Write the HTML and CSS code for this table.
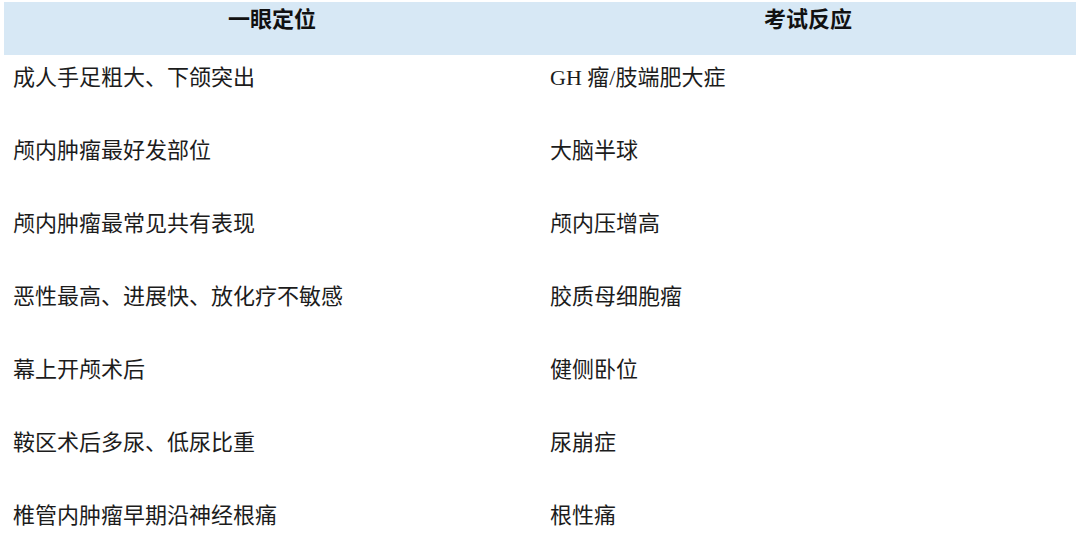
FILE: index.html
```html
<!DOCTYPE html>
<html lang="zh">
<head>
<meta charset="utf-8">
<link rel="stylesheet" href="styles.css">
</head>
<body>
<div class="table">
  <div class="row head">
    <div class="cell">一眼定位</div>
    <div class="cell">考试反应</div>
  </div>
  <div class="row">
    <div class="cell">成人手足粗大、下颌突出</div>
    <div class="cell">GH 瘤/肢端肥大症</div>
  </div>
  <div class="row">
    <div class="cell">颅内肿瘤最好发部位</div>
    <div class="cell">大脑半球</div>
  </div>
  <div class="row">
    <div class="cell">颅内肿瘤最常见共有表现</div>
    <div class="cell">颅内压增高</div>
  </div>
  <div class="row">
    <div class="cell">恶性最高、进展快、放化疗不敏感</div>
    <div class="cell">胶质母细胞瘤</div>
  </div>
  <div class="row">
    <div class="cell">幕上开颅术后</div>
    <div class="cell">健侧卧位</div>
  </div>
  <div class="row">
    <div class="cell">鞍区术后多尿、低尿比重</div>
    <div class="cell">尿崩症</div>
  </div>
  <div class="row">
    <div class="cell">椎管内肿瘤早期沿神经根痛</div>
    <div class="cell">根性痛</div>
  </div>
</div>
</body>
</html>
```
FILE: styles.css
```css
html, body {
  margin: 0;
  padding: 0;
  background: #ffffff;
}
body {
  width: 1080px;
  height: 557px;
  overflow: hidden;
  font-family: "Liberation Serif", "Noto Sans CJK SC", serif;
  color: #1c1c1c;
}
.table {
  padding: 2px 4px 0 4px;
}
.row {
  display: grid;
  grid-template-columns: 536px 536px;
  height: 73px;
}
.row .cell {
  font-size: 22px;
  line-height: 24px;
  padding-top: 11px;
  padding-left: 9px;
}
.row .cell + .cell {
  padding-left: 10px;
}
.row.head {
  height: 53px;
  background: #d7e8f5;
}
.row.head .cell {
  font-family: "Noto Sans CJK SC", sans-serif;
  font-weight: 700;
  font-size: 22px;
  line-height: 26px;
  padding: 2px 0 0 0;
  text-align: center;
  color: #111111;
}
```
